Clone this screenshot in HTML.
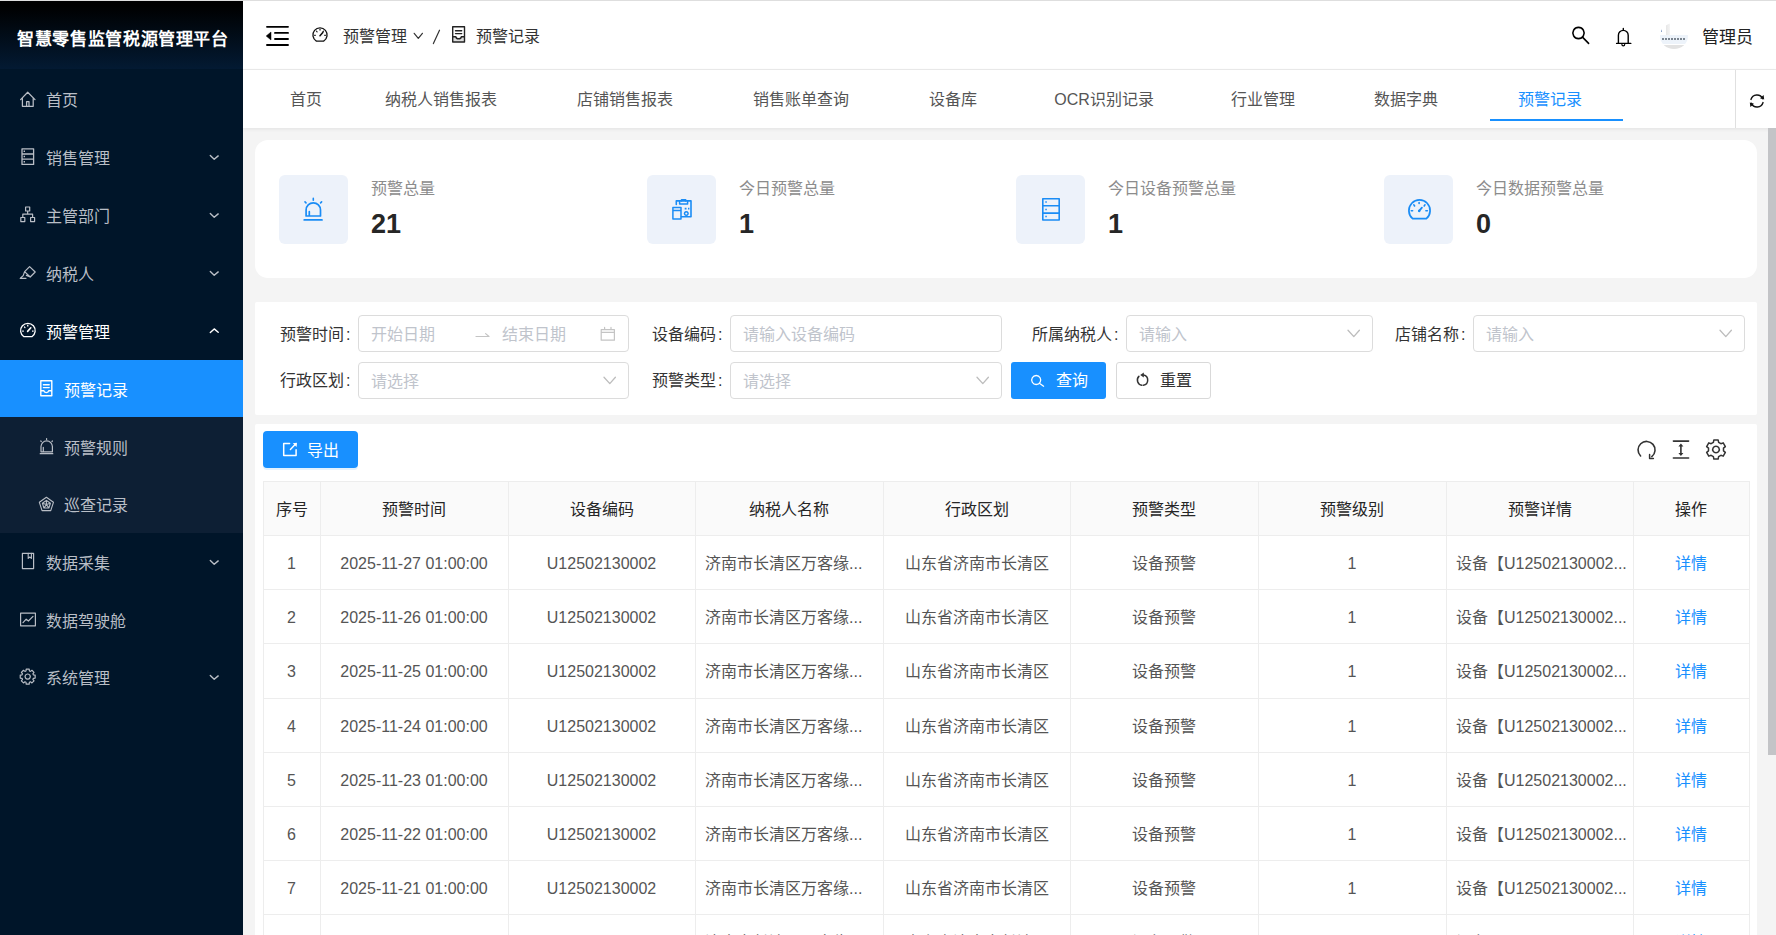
<!DOCTYPE html><html lang="zh-CN"><head><meta charset="utf-8"><style>
*{box-sizing:border-box;margin:0;padding:0}
html,body{width:1776px;height:935px;overflow:hidden;font-family:"Liberation Sans",sans-serif;background:#f4f4f4}
.a{position:absolute;white-space:nowrap;line-height:20px}
#side{position:absolute;left:0;top:0;width:243px;height:935px;background:#001529;overflow:hidden}
#logo{position:absolute;left:0;top:0;width:243px;height:69px;background:linear-gradient(180deg,#000 0%,#000 8%,#031a33 100%);color:#fff;font-weight:bold;font-size:17px;letter-spacing:0.65px;line-height:80px;padding-left:17px;white-space:nowrap}
.mt{position:absolute;font-size:16px;line-height:20px;white-space:nowrap}
#hdr{position:absolute;left:243px;top:0;width:1533px;height:70px;background:#fff;border-top:1px solid #e4e4e4;border-bottom:1px solid #ececec}
#tabs{position:absolute;left:243px;top:70px;width:1533px;height:58px;background:#fff;box-shadow:0 1px 4px rgba(0,0,0,.08)}
.tab{position:absolute;top:19px;line-height:22px;font-size:16px;color:#555;white-space:nowrap;width:200px;margin-left:-100px;text-align:center}
.card{position:absolute;background:#fff}
.lbl{position:absolute;font-size:16px;color:#333;white-space:nowrap;line-height:20px}
.inp{position:absolute;height:37px;border:1px solid #dcdcdc;border-radius:4px;background:#fff}
.ph{position:absolute;font-size:16px;color:#c0c4cc;white-space:nowrap;line-height:20px}
.th,.td{position:absolute;font-size:16px;white-space:nowrap;line-height:20px;text-align:center}
.th{color:#262626}
.td{color:#5c5c5c}
#ov{position:absolute;left:0;top:0;width:1776px;height:935px;pointer-events:none}
</style></head><body>
<div id="side"><div id="logo">智慧零售监管税源管理平台</div>
<div class="a" style="left:0;top:360px;width:243px;height:173px;background:#0d1f34"></div>
<div class="a" style="left:0;top:360px;width:243px;height:57px;background:#1890ff"></div>
<div class="mt" style="left:46px;top:91px;color:#b9bec6">首页</div>
<div class="mt" style="left:46px;top:149px;color:#b9bec6">销售管理</div>
<div class="mt" style="left:46px;top:207px;color:#b9bec6">主管部门</div>
<div class="mt" style="left:46px;top:265px;color:#b9bec6">纳税人</div>
<div class="mt" style="left:46px;top:323px;color:#fff">预警管理</div>
<div class="mt" style="left:64px;top:381px;color:#fff">预警记录</div>
<div class="mt" style="left:64px;top:439px;color:#b9bec6">预警规则</div>
<div class="mt" style="left:64px;top:496px;color:#b9bec6">巡查记录</div>
<div class="mt" style="left:46px;top:554px;color:#b9bec6">数据采集</div>
<div class="mt" style="left:46px;top:612px;color:#b9bec6">数据驾驶舱</div>
<div class="mt" style="left:46px;top:669px;color:#b9bec6">系统管理</div>
</div>
<div id="hdr"></div>
<div class="a" style="left:343px;top:27px;font-size:16px;color:#333">预警管理</div>
<div class="a" style="left:476px;top:27px;font-size:16px;color:#333">预警记录</div>
<div class="a" style="left:1660px;top:23px;width:28px;height:26px;border-radius:50%;overflow:hidden;background:#fff"><div style="position:absolute;left:6px;top:0;width:4px;height:12px;background:linear-gradient(90deg,#e6e6e6,#f4f4f4)"></div><div style="position:absolute;left:0;top:12px;width:28px;height:9px;background:#edf3fa"></div><div style="position:absolute;left:2px;top:15px;width:24px;height:2px;background:repeating-linear-gradient(90deg,#55606c 0 2px,transparent 2px 3px);opacity:.75"></div><div style="position:absolute;left:1px;top:6px;width:1px;height:3px;background:#8aa2c8"></div><div style="position:absolute;left:0;top:22px;width:28px;height:4px;background:#e2e2e2"></div></div>
<div class="a" style="left:1702px;top:28px;font-size:17px;color:#222">管理员</div>
<div id="tabs">
<div class="tab" style="left:63px;color:#555">首页</div>
<div class="tab" style="left:198px;color:#555">纳税人销售报表</div>
<div class="tab" style="left:382px;color:#555">店铺销售报表</div>
<div class="tab" style="left:558px;color:#555">销售账单查询</div>
<div class="tab" style="left:710px;color:#555">设备库</div>
<div class="tab" style="left:861px;color:#555">OCR识别记录</div>
<div class="tab" style="left:1020px;color:#555">行业管理</div>
<div class="tab" style="left:1163px;color:#555">数据字典</div>
<div class="tab" style="left:1307px;color:#1890ff">预警记录</div>
<div class="a" style="left:1247px;top:49px;width:133px;height:2px;background:#1890ff"></div>
<div class="a" style="left:1492px;top:0;width:1px;height:58px;background:#e0e0e0"></div>
</div>
<div class="a" style="left:1768px;top:128px;width:8px;height:627px;background:#c3c4c7"></div>
<div class="card" style="left:255px;top:140px;width:1502px;height:138px;border-radius:13px"></div>
<div class="a" style="left:279px;top:175px;width:69px;height:69px;border-radius:6px;background:#edf2fa"></div>
<div class="a" style="left:371px;top:179px;font-size:16px;color:#8c8c8c">预警总量</div>
<div class="a" style="left:371px;top:209px;font-size:27px;font-weight:bold;color:#262626;line-height:30px">21</div>
<div class="a" style="left:647px;top:175px;width:69px;height:69px;border-radius:6px;background:#edf2fa"></div>
<div class="a" style="left:739px;top:179px;font-size:16px;color:#8c8c8c">今日预警总量</div>
<div class="a" style="left:739px;top:209px;font-size:27px;font-weight:bold;color:#262626;line-height:30px">1</div>
<div class="a" style="left:1016px;top:175px;width:69px;height:69px;border-radius:6px;background:#edf2fa"></div>
<div class="a" style="left:1108px;top:179px;font-size:16px;color:#8c8c8c">今日设备预警总量</div>
<div class="a" style="left:1108px;top:209px;font-size:27px;font-weight:bold;color:#262626;line-height:30px">1</div>
<div class="a" style="left:1384px;top:175px;width:69px;height:69px;border-radius:6px;background:#edf2fa"></div>
<div class="a" style="left:1476px;top:179px;font-size:16px;color:#8c8c8c">今日数据预警总量</div>
<div class="a" style="left:1476px;top:209px;font-size:27px;font-weight:bold;color:#262626;line-height:30px">0</div>
<div class="card" style="left:255px;top:302px;width:1502px;height:113px;border-radius:2px"></div>
<div class="lbl" style="left:280px;top:325px">预警时间<span style="margin-left:2px">:</span></div>
<div class="inp" style="left:358px;top:315px;width:271px"></div>
<div class="ph" style="left:371px;top:325px">开始日期</div>
<div class="ph" style="left:502px;top:325px">结束日期</div>
<div class="lbl" style="left:652px;top:325px">设备编码<span style="margin-left:2px">:</span></div>
<div class="inp" style="left:730px;top:315px;width:272px"></div>
<div class="ph" style="left:743px;top:325px">请输入设备编码</div>
<div class="lbl" style="left:1032px;top:325px">所属纳税人<span style="margin-left:2px">:</span></div>
<div class="inp" style="left:1126px;top:315px;width:247px"></div>
<div class="ph" style="left:1139px;top:325px">请输入</div>
<div class="lbl" style="left:1395px;top:325px">店铺名称<span style="margin-left:2px">:</span></div>
<div class="inp" style="left:1473px;top:315px;width:272px"></div>
<div class="ph" style="left:1486px;top:325px">请输入</div>
<div class="lbl" style="left:280px;top:371px">行政区划<span style="margin-left:2px">:</span></div>
<div class="inp" style="left:358px;top:362px;width:271px"></div>
<div class="ph" style="left:371px;top:372px">请选择</div>
<div class="lbl" style="left:652px;top:371px">预警类型<span style="margin-left:2px">:</span></div>
<div class="inp" style="left:730px;top:362px;width:272px"></div>
<div class="ph" style="left:743px;top:372px">请选择</div>
<div class="a" style="left:1011px;top:362px;width:95px;height:37px;background:#1890ff;border-radius:3px"></div>
<div class="a" style="left:1056px;top:371px;font-size:16px;color:#fff">查询</div>
<div class="a" style="left:1116px;top:362px;width:95px;height:37px;background:#fff;border:1px solid #d9d9d9;border-radius:3px"></div>
<div class="a" style="left:1160px;top:371px;font-size:16px;color:#333">重置</div>
<div class="card" style="left:255px;top:424px;width:1502px;height:520px;border-radius:2px"></div>
<div class="a" style="left:263px;top:431px;width:95px;height:37px;background:#1890ff;border-radius:4px;box-shadow:0 2px 0 rgba(24,144,255,.12)"></div>
<div class="a" style="left:307px;top:441px;font-size:16px;color:#fff">导出</div>
<div class="a" style="left:263px;top:481px;width:1486px;height:54px;background:#fafafa"></div>
<div class="a" style="left:263px;top:481.0px;width:1486px;height:1px;background:#ededed"></div>
<div class="a" style="left:263px;top:535.0px;width:1486px;height:1px;background:#ededed"></div>
<div class="a" style="left:263px;top:589.2px;width:1486px;height:1px;background:#ededed"></div>
<div class="a" style="left:263px;top:643.4px;width:1486px;height:1px;background:#ededed"></div>
<div class="a" style="left:263px;top:697.6px;width:1486px;height:1px;background:#ededed"></div>
<div class="a" style="left:263px;top:751.8px;width:1486px;height:1px;background:#ededed"></div>
<div class="a" style="left:263px;top:806.0px;width:1486px;height:1px;background:#ededed"></div>
<div class="a" style="left:263px;top:860.2px;width:1486px;height:1px;background:#ededed"></div>
<div class="a" style="left:263px;top:914.4px;width:1486px;height:1px;background:#ededed"></div>
<div class="a" style="left:263px;top:968.6px;width:1486px;height:1px;background:#ededed"></div>
<div class="a" style="left:263px;top:481px;width:1px;height:500px;background:#ededed"></div>
<div class="a" style="left:320px;top:481px;width:1px;height:500px;background:#ededed"></div>
<div class="a" style="left:508px;top:481px;width:1px;height:500px;background:#ededed"></div>
<div class="a" style="left:695px;top:481px;width:1px;height:500px;background:#ededed"></div>
<div class="a" style="left:883px;top:481px;width:1px;height:500px;background:#ededed"></div>
<div class="a" style="left:1070px;top:481px;width:1px;height:500px;background:#ededed"></div>
<div class="a" style="left:1258px;top:481px;width:1px;height:500px;background:#ededed"></div>
<div class="a" style="left:1446px;top:481px;width:1px;height:500px;background:#ededed"></div>
<div class="a" style="left:1633px;top:481px;width:1px;height:500px;background:#ededed"></div>
<div class="a" style="left:1749px;top:481px;width:1px;height:500px;background:#ededed"></div>
<div class="th" style="left:291.5px;top:500px;width:200px;margin-left:-100px">序号</div>
<div class="th" style="left:414.0px;top:500px;width:200px;margin-left:-100px">预警时间</div>
<div class="th" style="left:601.5px;top:500px;width:200px;margin-left:-100px">设备编码</div>
<div class="th" style="left:789.0px;top:500px;width:200px;margin-left:-100px">纳税人名称</div>
<div class="th" style="left:976.5px;top:500px;width:200px;margin-left:-100px">行政区划</div>
<div class="th" style="left:1164.0px;top:500px;width:200px;margin-left:-100px">预警类型</div>
<div class="th" style="left:1352.0px;top:500px;width:200px;margin-left:-100px">预警级别</div>
<div class="th" style="left:1539.5px;top:500px;width:200px;margin-left:-100px">预警详情</div>
<div class="th" style="left:1691.0px;top:500px;width:200px;margin-left:-100px">操作</div>
<div class="td" style="left:291.5px;top:554.0px;width:220px;margin-left:-110px;color:#555">1</div>
<div class="td" style="left:414.0px;top:554.0px;width:220px;margin-left:-110px;color:#555">2025-11-27 01:00:00</div>
<div class="td" style="left:601.5px;top:554.0px;width:220px;margin-left:-110px;color:#555">U12502130002</div>
<div class="td" style="left:705px;top:554.0px;text-align:left;color:#555">济南市长清区万客缘...</div>
<div class="td" style="left:976.5px;top:554.0px;width:220px;margin-left:-110px;color:#555">山东省济南市长清区</div>
<div class="td" style="left:1164.0px;top:554.0px;width:220px;margin-left:-110px;color:#555">设备预警</div>
<div class="td" style="left:1352.0px;top:554.0px;width:220px;margin-left:-110px;color:#555">1</div>
<div class="td" style="left:1456px;top:554.0px;text-align:left;color:#555">设备【U12502130002...</div>
<div class="td" style="left:1691.0px;top:554.0px;width:220px;margin-left:-110px;color:#1890ff">详情</div>
<div class="td" style="left:291.5px;top:608.2px;width:220px;margin-left:-110px;color:#555">2</div>
<div class="td" style="left:414.0px;top:608.2px;width:220px;margin-left:-110px;color:#555">2025-11-26 01:00:00</div>
<div class="td" style="left:601.5px;top:608.2px;width:220px;margin-left:-110px;color:#555">U12502130002</div>
<div class="td" style="left:705px;top:608.2px;text-align:left;color:#555">济南市长清区万客缘...</div>
<div class="td" style="left:976.5px;top:608.2px;width:220px;margin-left:-110px;color:#555">山东省济南市长清区</div>
<div class="td" style="left:1164.0px;top:608.2px;width:220px;margin-left:-110px;color:#555">设备预警</div>
<div class="td" style="left:1352.0px;top:608.2px;width:220px;margin-left:-110px;color:#555">1</div>
<div class="td" style="left:1456px;top:608.2px;text-align:left;color:#555">设备【U12502130002...</div>
<div class="td" style="left:1691.0px;top:608.2px;width:220px;margin-left:-110px;color:#1890ff">详情</div>
<div class="td" style="left:291.5px;top:662.4px;width:220px;margin-left:-110px;color:#555">3</div>
<div class="td" style="left:414.0px;top:662.4px;width:220px;margin-left:-110px;color:#555">2025-11-25 01:00:00</div>
<div class="td" style="left:601.5px;top:662.4px;width:220px;margin-left:-110px;color:#555">U12502130002</div>
<div class="td" style="left:705px;top:662.4px;text-align:left;color:#555">济南市长清区万客缘...</div>
<div class="td" style="left:976.5px;top:662.4px;width:220px;margin-left:-110px;color:#555">山东省济南市长清区</div>
<div class="td" style="left:1164.0px;top:662.4px;width:220px;margin-left:-110px;color:#555">设备预警</div>
<div class="td" style="left:1352.0px;top:662.4px;width:220px;margin-left:-110px;color:#555">1</div>
<div class="td" style="left:1456px;top:662.4px;text-align:left;color:#555">设备【U12502130002...</div>
<div class="td" style="left:1691.0px;top:662.4px;width:220px;margin-left:-110px;color:#1890ff">详情</div>
<div class="td" style="left:291.5px;top:716.6px;width:220px;margin-left:-110px;color:#555">4</div>
<div class="td" style="left:414.0px;top:716.6px;width:220px;margin-left:-110px;color:#555">2025-11-24 01:00:00</div>
<div class="td" style="left:601.5px;top:716.6px;width:220px;margin-left:-110px;color:#555">U12502130002</div>
<div class="td" style="left:705px;top:716.6px;text-align:left;color:#555">济南市长清区万客缘...</div>
<div class="td" style="left:976.5px;top:716.6px;width:220px;margin-left:-110px;color:#555">山东省济南市长清区</div>
<div class="td" style="left:1164.0px;top:716.6px;width:220px;margin-left:-110px;color:#555">设备预警</div>
<div class="td" style="left:1352.0px;top:716.6px;width:220px;margin-left:-110px;color:#555">1</div>
<div class="td" style="left:1456px;top:716.6px;text-align:left;color:#555">设备【U12502130002...</div>
<div class="td" style="left:1691.0px;top:716.6px;width:220px;margin-left:-110px;color:#1890ff">详情</div>
<div class="td" style="left:291.5px;top:770.8px;width:220px;margin-left:-110px;color:#555">5</div>
<div class="td" style="left:414.0px;top:770.8px;width:220px;margin-left:-110px;color:#555">2025-11-23 01:00:00</div>
<div class="td" style="left:601.5px;top:770.8px;width:220px;margin-left:-110px;color:#555">U12502130002</div>
<div class="td" style="left:705px;top:770.8px;text-align:left;color:#555">济南市长清区万客缘...</div>
<div class="td" style="left:976.5px;top:770.8px;width:220px;margin-left:-110px;color:#555">山东省济南市长清区</div>
<div class="td" style="left:1164.0px;top:770.8px;width:220px;margin-left:-110px;color:#555">设备预警</div>
<div class="td" style="left:1352.0px;top:770.8px;width:220px;margin-left:-110px;color:#555">1</div>
<div class="td" style="left:1456px;top:770.8px;text-align:left;color:#555">设备【U12502130002...</div>
<div class="td" style="left:1691.0px;top:770.8px;width:220px;margin-left:-110px;color:#1890ff">详情</div>
<div class="td" style="left:291.5px;top:825.0px;width:220px;margin-left:-110px;color:#555">6</div>
<div class="td" style="left:414.0px;top:825.0px;width:220px;margin-left:-110px;color:#555">2025-11-22 01:00:00</div>
<div class="td" style="left:601.5px;top:825.0px;width:220px;margin-left:-110px;color:#555">U12502130002</div>
<div class="td" style="left:705px;top:825.0px;text-align:left;color:#555">济南市长清区万客缘...</div>
<div class="td" style="left:976.5px;top:825.0px;width:220px;margin-left:-110px;color:#555">山东省济南市长清区</div>
<div class="td" style="left:1164.0px;top:825.0px;width:220px;margin-left:-110px;color:#555">设备预警</div>
<div class="td" style="left:1352.0px;top:825.0px;width:220px;margin-left:-110px;color:#555">1</div>
<div class="td" style="left:1456px;top:825.0px;text-align:left;color:#555">设备【U12502130002...</div>
<div class="td" style="left:1691.0px;top:825.0px;width:220px;margin-left:-110px;color:#1890ff">详情</div>
<div class="td" style="left:291.5px;top:879.2px;width:220px;margin-left:-110px;color:#555">7</div>
<div class="td" style="left:414.0px;top:879.2px;width:220px;margin-left:-110px;color:#555">2025-11-21 01:00:00</div>
<div class="td" style="left:601.5px;top:879.2px;width:220px;margin-left:-110px;color:#555">U12502130002</div>
<div class="td" style="left:705px;top:879.2px;text-align:left;color:#555">济南市长清区万客缘...</div>
<div class="td" style="left:976.5px;top:879.2px;width:220px;margin-left:-110px;color:#555">山东省济南市长清区</div>
<div class="td" style="left:1164.0px;top:879.2px;width:220px;margin-left:-110px;color:#555">设备预警</div>
<div class="td" style="left:1352.0px;top:879.2px;width:220px;margin-left:-110px;color:#555">1</div>
<div class="td" style="left:1456px;top:879.2px;text-align:left;color:#555">设备【U12502130002...</div>
<div class="td" style="left:1691.0px;top:879.2px;width:220px;margin-left:-110px;color:#1890ff">详情</div>
<div class="td" style="left:291.5px;top:933.4px;width:220px;margin-left:-110px;color:#555">8</div>
<div class="td" style="left:414.0px;top:933.4px;width:220px;margin-left:-110px;color:#555">2025-11-20 01:00:00</div>
<div class="td" style="left:601.5px;top:933.4px;width:220px;margin-left:-110px;color:#555">U12502130002</div>
<div class="td" style="left:705px;top:933.4px;text-align:left;color:#555">济南市长清区万客缘...</div>
<div class="td" style="left:976.5px;top:933.4px;width:220px;margin-left:-110px;color:#555">山东省济南市长清区</div>
<div class="td" style="left:1164.0px;top:933.4px;width:220px;margin-left:-110px;color:#555">设备预警</div>
<div class="td" style="left:1352.0px;top:933.4px;width:220px;margin-left:-110px;color:#555">1</div>
<div class="td" style="left:1456px;top:933.4px;text-align:left;color:#555">设备【U12502130002...</div>
<div class="td" style="left:1691.0px;top:933.4px;width:220px;margin-left:-110px;color:#1890ff">详情</div>
<div class="a" style="left:0;top:0;width:1776px;height:1px;background:#dedede"></div>
<svg id="ov" width="1776" height="935" viewBox="0 0 1776 935"><path d="M210.3 155.6 L214.2 159.3 L218.2 155.9" fill="none" stroke="#b9bec6" stroke-width="1.4" stroke-linecap="round" stroke-linejoin="round" /><path d="M210.3 213.6 L214.2 217.3 L218.2 213.9" fill="none" stroke="#b9bec6" stroke-width="1.4" stroke-linecap="round" stroke-linejoin="round" /><path d="M210.3 271.6 L214.2 275.3 L218.2 271.9" fill="none" stroke="#b9bec6" stroke-width="1.4" stroke-linecap="round" stroke-linejoin="round" /><path d="M210.3 332.6 L214.2 328.9 L218.2 332.3" fill="none" stroke="#fff" stroke-width="1.4" stroke-linecap="round" stroke-linejoin="round" /><path d="M210.3 560.6 L214.2 564.3 L218.2 560.9" fill="none" stroke="#b9bec6" stroke-width="1.4" stroke-linecap="round" stroke-linejoin="round" /><path d="M210.3 675.6 L214.2 679.3 L218.2 675.9" fill="none" stroke="#b9bec6" stroke-width="1.4" stroke-linecap="round" stroke-linejoin="round" /><path d="M20.6 99.6 L27.7 92.2 L35 99.6 M22.4 98.6 V106.3 H33.2 V98.6 M26.6 106.3 V101.6 H29 V106.3" fill="none" stroke="#b9bec6" stroke-width="1.25" stroke-linecap="round" stroke-linejoin="round" /><path d="M22 148.8 H33.6 V164.4 H22 Z M22 154 H33.6 M22 159.2 H33.6" fill="none" stroke="#b9bec6" stroke-width="1.3" stroke-linecap="round" stroke-linejoin="round" /><path d="M23.6 150.6 h1.4 v1.4 h-1.4 Z M23.6 155.8 h1.4 v1.4 h-1.4 Z M23.6 161 h1.4 v1.4 h-1.4 Z" fill="#b9bec6"/><path d="M25.6 207 H29.7 V211 H25.6 Z M20.8 217.5 H24.8 V221.6 H20.8 Z M30.6 217.5 H34.6 V221.6 H30.6 Z M27.65 211 V214.2 M22.8 217.5 V214.2 H32.6 V217.5" fill="none" stroke="#b9bec6" stroke-width="1.2" stroke-linecap="round" stroke-linejoin="round" /><path d="M29.6 266.6 L35.2 272 L30.2 277 L24.6 271.6 Z M24.6 271.6 L23.2 275.6 L20.6 278 M30.2 277 L26.4 275.4 M20.2 278.3 H26" fill="none" stroke="#b9bec6" stroke-width="1.2" stroke-linecap="round" stroke-linejoin="round" /><path d="M23.9 336.7 A7.3 7.3 0 1 1 31.9 336.7 Z" fill="none" stroke="#fff" stroke-width="1.3" stroke-linecap="round" stroke-linejoin="round" /><path d="M27.6 331.4 L30.8 327.8" fill="none" stroke="#fff" stroke-width="1.6" stroke-linecap="round" stroke-linejoin="round" /><path d="M22.2 330.4 h1.6 v1.3 h-1.6 Z M32 330.4 h1.6 v1.3 h-1.6 Z M27.1 324.8 h1.3 v1.6 h-1.3 Z" fill="#fff"/><path d="M24.4 326.9 L25 327.6" fill="none" stroke="#fff" stroke-width="1.2" stroke-linecap="round" stroke-linejoin="round" /><path d="M40.8 380.8 H51.8 V395.8 H40.8 Z M43.4 384.7 H49.2 M43.4 387.6 H49.2 M40.8 390.7 H43.8 Q44.1 392.6 46.3 392.6 Q48.5 392.6 48.8 390.7 H51.8" fill="none" stroke="#fff" stroke-width="1.4" stroke-linecap="round" stroke-linejoin="round" /><path d="M41 451.8 V446.6 A5.7 5.7 0 0 1 52.4 446.6 V451.8 Z M43.3 451.5 V447.3 M40.2 453.7 H52.8" fill="none" stroke="#b9bec6" stroke-width="1.2" stroke-linecap="round" stroke-linejoin="round" /><path d="M46.6 438.6 V439.4 M40.8 441 L41.3 441.6 M52.4 441 L51.9 441.6" fill="none" stroke="#b9bec6" stroke-width="1.2" stroke-linecap="round" stroke-linejoin="round" /><path d="M46.40 497.20 L39.36 502.31 L42.05 510.59 L50.75 510.59 L53.44 502.31 Z M46.40 500.40 L42.41 503.30 L43.93 508.00 L48.87 508.00 L50.39 503.30 Z M46.40 504.60 L46.40 500.40 M46.40 504.60 L42.41 503.30 M46.40 504.60 L43.93 508.00 M46.40 504.60 L48.87 508.00 M46.40 504.60 L50.39 503.30" fill="none" stroke="#b9bec6" stroke-width="1.1" stroke-linecap="round" stroke-linejoin="round" /><path d="M22.4 553.3 H33.6 V568.6 H22.4 Z" fill="none" stroke="#b9bec6" stroke-width="1.2" stroke-linecap="round" stroke-linejoin="round" /><path d="M28.2 553.3 V558.4 L29.8 557 L31.4 558.4 V553.3" fill="none" stroke="#b9bec6" stroke-width="1.1" stroke-linecap="round" stroke-linejoin="round" /><path d="M20.6 613.2 H35.4 V625.8 H20.6 Z M23 622.6 L26.2 619.2 L28.4 621 L33 616.4" fill="none" stroke="#b9bec6" stroke-width="1.2" stroke-linecap="round" stroke-linejoin="round" /><path d="M29.41 670.95 L29.18 669.15 L26.22 669.15 L25.99 670.95 L24.92 671.40 L23.48 670.28 L21.38 672.38 L22.50 673.82 L22.05 674.89 L20.25 675.12 L20.25 678.08 L22.05 678.31 L22.50 679.38 L21.38 680.82 L23.48 682.92 L24.92 681.80 L25.99 682.25 L26.22 684.05 L29.18 684.05 L29.41 682.25 L30.48 681.80 L31.92 682.92 L34.02 680.82 L32.90 679.38 L33.35 678.31 L35.15 678.08 L35.15 675.12 L33.35 674.89 L32.90 673.82 L34.02 672.38 L31.92 670.28 L30.48 671.40 Z" fill="none" stroke="#b9bec6" stroke-width="1.2" stroke-linecap="round" stroke-linejoin="round" /><path d="M27.7 674 A2.6 2.6 0 1 1 27.69 674 Z" fill="none" stroke="#b9bec6" stroke-width="1.2" stroke-linecap="round" stroke-linejoin="round" /><path d="M267 26.85 H288 M275 32.9 H288 M275 39 H288 M267 44.95 H288" stroke="#000" stroke-width="1.9" stroke-linecap="round"/><path d="M266.2 36 L271 32 V40 Z" fill="#000" stroke="#000" stroke-width="0.5" stroke-linejoin="round"/><path d="M316.37 41.1 A7.1 7.1 0 1 1 323.63 41.1 Z" fill="none" stroke="#111" stroke-width="1.3" stroke-linecap="round" stroke-linejoin="round" /><path d="M320 35.8 L322.8 32.4" fill="none" stroke="#111" stroke-width="1.5" stroke-linecap="round" stroke-linejoin="round" /><path d="M314.2 34.8 h1.5 v1.2 h-1.5 Z M324.3 34.8 h1.5 v1.2 h-1.5 Z M319.4 28.9 h1.2 v1.5 h-1.2 Z" fill="#111"/><path d="M316.5 31.2 L317.1 31.8 M323.5 31.2 L322.9 31.8" fill="none" stroke="#111" stroke-width="1.1" stroke-linecap="round" stroke-linejoin="round" /><path d="M414.2 33.3 L418.3 38.4 L422.4 33.3" fill="none" stroke="#333" stroke-width="1.2" stroke-linecap="round" stroke-linejoin="round" /><path d="M439.5 30.2 L433.4 43.6" fill="none" stroke="#333" stroke-width="1.2" stroke-linecap="round" stroke-linejoin="round" /><path d="M452.7 36.8 H455.9 Q456.2 38.8 458.6 38.8 Q461.0 38.8 461.3 36.8 H464.5 V42.0 H452.7 Z" fill="#dcdcdc"/><path d="M452.7 26.8 H464.5 V42.0 H452.7 Z M455.5 30.8 H461.7 M455.5 33.6 H461.7 M452.7 36.8 H455.9 Q456.2 38.8 458.6 38.8 Q461.0 38.8 461.3 36.8 H464.5" fill="none" stroke="#222" stroke-width="1.4" stroke-linecap="round" stroke-linejoin="round" /><path d="M1578.5 27.4 A5.6 5.6 0 1 1 1578.49 27.4 Z" fill="none" stroke="#000" stroke-width="1.6" stroke-linecap="round" stroke-linejoin="round" /><path d="M1582.7 37.4 L1588.6 43.4" fill="none" stroke="#000" stroke-width="1.6" stroke-linecap="round" stroke-linejoin="round" /><path d="M1618.4 43.2 V35.3 A4.9 4.9 0 0 1 1628.2 35.3 V43.2 M1616.6 43.4 H1630.8 M1623.3 28.4 V30.2" fill="none" stroke="#000" stroke-width="1.4" stroke-linecap="round" stroke-linejoin="round" /><path d="M1621.9 44.4 A1.4 1.4 0 0 0 1624.7 44.4" fill="none" stroke="#000" stroke-width="1.2" stroke-linecap="round" stroke-linejoin="round" /><path d="M1751 99.4 A6.2 6.2 0 0 1 1762.6 98.6" fill="none" stroke="#111" stroke-width="1.5" stroke-linecap="round" stroke-linejoin="round" /><path d="M1763 102.6 A6.2 6.2 0 0 1 1751.4 103.4" fill="none" stroke="#111" stroke-width="1.5" stroke-linecap="round" stroke-linejoin="round" /><path d="M1764.2 99.6 L1763.6 95 L1760 98.2 Z M1749.8 102.4 L1750.4 107 L1754 103.8 Z" fill="#111"/><path d="M306.1 216 V210 A7.2 7.2 0 0 1 320.5 210 V216 Z M309.3 215.5 V211.6" fill="none" stroke="#1a8cf5" stroke-width="1.7" stroke-linecap="round" stroke-linejoin="round" /><path d="M304.3 219.9 H321.9" fill="none" stroke="#1a8cf5" stroke-width="1.9" stroke-linecap="round" stroke-linejoin="round" /><path d="M313.3 198.4 V200.2 M305 201.9 L306 202.9 M321.6 201.9 L320.6 202.9" fill="none" stroke="#1a8cf5" stroke-width="1.6" stroke-linecap="round" stroke-linejoin="round" /><path d="M676.3 204.5 V200.9 H691 V216.8 H681.4" fill="none" stroke="#1a8cf5" stroke-width="1.6" stroke-linecap="round" stroke-linejoin="round" /><path d="M679.6 200.9 V204 H687.6 V200.9 M681.5 200.9 V199.8 H685.7 V200.9" fill="none" stroke="#1a8cf5" stroke-width="1.5" stroke-linecap="round" stroke-linejoin="round" /><path d="M672.9 207.6 H681 V219 H672.9 Z M672.9 210.6 H681" fill="none" stroke="#1a8cf5" stroke-width="1.5" stroke-linecap="round" stroke-linejoin="round" /><path d="M684.7 207.8 h1.8 v1.6 h-1.8 Z M688 207.8 h1.4 v1.6 h-1.4 Z" fill="#1a8cf5"/><path d="M686.3 211.7 A1.8 1.8 0 1 1 686.29 211.7 Z" fill="none" stroke="#1a8cf5" stroke-width="1.5" stroke-linecap="round" stroke-linejoin="round" /><path d="M1042.8 198.7 H1059.2 V220 H1042.8 Z M1042.8 205.8 H1059.2 M1042.8 213.1 H1059.2" fill="none" stroke="#1a8cf5" stroke-width="1.6" stroke-linecap="round" stroke-linejoin="round" /><path d="M1045.3 201.3 h1.5 v1.5 h-1.5 Z M1045.3 208.7 h1.5 v1.5 h-1.5 Z M1045.3 215.7 h1.5 v1.5 h-1.5 Z" fill="#1a8cf5"/><path d="M1412.66 218.6 A10.6 10.6 0 1 1 1426.34 218.6 Z" fill="none" stroke="#1a8cf5" stroke-width="1.7" stroke-linecap="round" stroke-linejoin="round" /><path d="M1419.2 210.9 L1421.9 207.6" fill="none" stroke="#1a8cf5" stroke-width="1.8" stroke-linecap="round" stroke-linejoin="round" /><path d="M1419.2 209.6 A1.3 1.3 0 1 1 1419.19 209.6 Z" fill="#1a8cf5"/><path d="M1411.3 210.7 H1412.6 M1425.9 210.7 H1427.4 M1419.1 202.6 V203.4 M1413.9 204.8 L1414.6 206 M1424.9 204.8 L1424.2 206" fill="none" stroke="#1a8cf5" stroke-width="1.6" stroke-linecap="round" stroke-linejoin="round" /><path d="M476 336.5 H489 L485.6 333.6" fill="none" stroke="#c4c4c4" stroke-width="1.2" stroke-linecap="round" stroke-linejoin="round" /><path d="M601.2 329.6 H614.4 V340.2 H601.2 Z M601.2 332.4 H614.4 M604.6 327.4 V329.6 M611 327.4 V329.6" fill="none" stroke="#c4c4c4" stroke-width="1.2" stroke-linecap="round" stroke-linejoin="round" /><path d="M1348.0 330.2 L1353.8 336.6 L1359.4 330.2" fill="none" stroke="#bdbdbd" stroke-width="1.3" stroke-linecap="round" stroke-linejoin="round" /><path d="M1720.0 330.2 L1725.8 336.6 L1731.4 330.2" fill="none" stroke="#bdbdbd" stroke-width="1.3" stroke-linecap="round" stroke-linejoin="round" /><path d="M604.0 377.2 L609.8 383.6 L615.4 377.2" fill="none" stroke="#bdbdbd" stroke-width="1.3" stroke-linecap="round" stroke-linejoin="round" /><path d="M977.0 377.2 L982.8 383.6 L988.4 377.2" fill="none" stroke="#bdbdbd" stroke-width="1.3" stroke-linecap="round" stroke-linejoin="round" /><path d="M1036.2 375.5 A4.5 4.5 0 1 1 1036.19 375.5 Z M1039.4 383.2 L1043.6 386.2" fill="none" stroke="#fff" stroke-width="1.3" stroke-linecap="round" stroke-linejoin="round" /><path d="M1143.6 375 A5.2 5.2 0 0 1 1143.4 385.2 M1141.8 385.2 A5.2 5.2 0 0 1 1138.9 376.4" fill="none" stroke="#333" stroke-width="1.5" stroke-linecap="round" stroke-linejoin="round" /><path d="M1140.2 375 L1143.8 372.4 L1143.8 377.4 Z" fill="#333"/><path d="M289.6 443.6 H283.7 V455.4 H296.1 V449.8" fill="none" stroke="#fff" stroke-width="1.5" stroke-linecap="round" stroke-linejoin="round" /><path d="M290.4 449.4 L295.6 444" fill="none" stroke="#fff" stroke-width="1.4" stroke-linecap="round" stroke-linejoin="round" /><path d="M297 442.8 L292.8 443.2 L296.6 447 Z" fill="#fff"/><path d="M1640.6 456 A8.5 8.5 0 1 1 1651.8 456.6" fill="none" stroke="#333" stroke-width="1.6" stroke-linecap="round" stroke-linejoin="round" /><path d="M1649.6 454.6 V458.4 H1653.4" fill="none" stroke="#333" stroke-width="1.5" stroke-linecap="round" stroke-linejoin="round" /><path d="M1673.4 441.1 H1688.6 M1673.4 458 H1688.6 M1680.9 445.5 V454" fill="none" stroke="#333" stroke-width="1.6" stroke-linecap="round" stroke-linejoin="round" /><path d="M1678.4 446.6 L1680.9 443.6 L1683.4 446.6 Z M1678.4 453 L1680.9 456 L1683.4 453 Z" fill="#333"/><path d="M1718.61 442.36 L1718.14 439.94 L1713.86 439.94 L1713.39 442.36 L1711.12 443.67 L1708.79 442.87 L1706.65 446.57 L1708.51 448.19 L1708.51 450.81 L1706.65 452.43 L1708.79 456.13 L1711.12 455.33 L1713.39 456.64 L1713.86 459.06 L1718.14 459.06 L1718.61 456.64 L1720.88 455.33 L1723.21 456.13 L1725.35 452.43 L1723.49 450.81 L1723.49 448.19 L1725.35 446.57 L1723.21 442.87 L1720.88 443.67 Z" fill="none" stroke="#333" stroke-width="1.5" stroke-linecap="round" stroke-linejoin="round" /><path d="M1716 446.2 A3.3 3.3 0 1 1 1715.99 446.2 Z" fill="none" stroke="#333" stroke-width="1.5" stroke-linecap="round" stroke-linejoin="round" /></svg>
</body></html>
